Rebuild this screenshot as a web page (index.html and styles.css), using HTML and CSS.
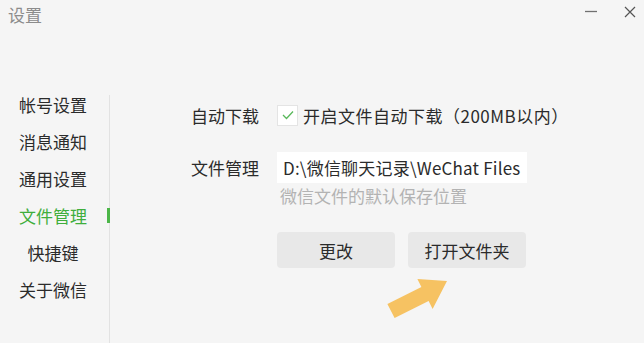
FILE: index.html
```html
<!DOCTYPE html>
<html lang="zh-CN">
<head>
    <meta charset="UTF-8">
    <meta name="viewport" content="width=device-width, initial-scale=1.0">
    <title>设置</title>
    <link rel="stylesheet" href="styles.css">
</head>
<body>
    <div class="titlebar">
        <span class="title">设置</span>
        <div class="win-btns">
            <svg class="win-btn" width="14" height="14" viewBox="0 0 14 14"><line x1="1" y1="6.5" x2="13" y2="6.5" stroke="#707070" stroke-width="1.3"/></svg>
            <svg class="win-btn" width="14" height="14" viewBox="0 0 14 14"><path d="M2 2 L12 12 M12 2 L2 12" stroke="#555" stroke-width="1.2" fill="none"/></svg>
        </div>
    </div>

    <div class="main">
        <ul class="nav">
            <li>帐号设置</li>
            <li>消息通知</li>
            <li>通用设置</li>
            <li class="active">文件管理</li>
            <li>快捷键</li>
            <li>关于微信</li>
        </ul>
        <div class="divider"></div>

        <div class="content">
            <div class="row">
                <span class="label">自动下载</span>
                <label class="check">
                    <span class="box">
                        <svg width="14" height="12" viewBox="0 0 14 12"><path d="M2 6 L5.5 9.5 L12 2.5" stroke="#59b85a" stroke-width="1.3" fill="none"/></svg>
                    </span>
                    <span class="check-text">开启文件自动下载（200MB以内）</span>
                </label>
            </div>

            <div class="row row-path">
                <span class="label">文件管理</span>
                <div class="path">D:\微信聊天记录\WeChat Files</div>
            </div>
            <div class="hint">微信文件的默认保存位置</div>

            <div class="actions">
                <button class="btn">更改</button>
                <button class="btn">打开文件夹</button>
            </div>
        </div>
    </div>

    <svg class="arrow" width="644" height="343" viewBox="0 0 644 343">
        <polygon points="387.4,303.9 421.4,286.9 417.4,278.9 447,281 432.6,309.1 428.6,301.1 394.6,318.1" fill="#f6c262"/>
    </svg>
</body>
</html>
```

FILE: styles.css
```css
body {
    margin: 0;
    width: 644px;
    height: 343px;
    overflow: hidden;
    background-color: #f5f5f5;
    font-family: "Noto Sans CJK SC", "Noto Sans", sans-serif;
    color: #2b2b2b;
    position: relative;
}
.titlebar {
    display: flex;
    justify-content: space-between;
    align-items: flex-start;
    height: 86px;
    padding-left: 8px;
}
.title {
    font-size: 17px;
    line-height: 30px;
    color: #8c8c8c;
}
.win-btns {
    display: flex;
    gap: 25px;
    padding-top: 5px;
    padding-right: 7px;
}
.main {
    display: flex;
    height: 257px;
}
.nav {
    list-style: none;
    margin: 0;
    padding: 0 22px 0 19px;
    width: 68px;
}
.nav li {
    height: 37px;
    line-height: 37px;
    text-align: center;
    font-size: 17px;
    position: relative;
}
.nav li.active {
    color: #3fae3c;
}
.nav li.active::after {
    content: "";
    position: absolute;
    right: -23px;
    top: 11px;
    width: 3px;
    height: 15px;
    background-color: #4cb648;
    z-index: 1;
}
.divider {
    width: 1px;
    margin-top: 9px;
    background-color: #e2e2e2;
}
.content {
    padding: 17px 0 0 81px;
}
.row {
    display: flex;
    align-items: center;
    height: 24px;
}
.label {
    width: 86px;
    font-size: 17px;
}
.check {
    display: flex;
    align-items: center;
    gap: 5px;
    font-size: 17px;
}
.check-text {
    letter-spacing: 0.5px;
}
.box {
    width: 19px;
    height: 19px;
    background: #fff;
    border: 1px solid #e4e4e4;
    display: flex;
    align-items: center;
    justify-content: center;
}
.row-path {
    height: 31px;
    margin-top: 25px;
}
.path {
    width: 244px;
    height: 31px;
    line-height: 31px;
    padding-left: 6px;
    background: #fff;
    font-size: 17px;
    letter-spacing: 0.2px;
    white-space: nowrap;
    overflow: hidden;
}
.hint {
    margin: 1px 0 0 89px;
    font-size: 17px;
    line-height: 24px;
    color: #b3b3b3;
}
.actions {
    display: flex;
    gap: 13px;
    margin: 24px 0 0 86px;
}
.btn {
    width: 118px;
    height: 36px;
    border: none;
    border-radius: 4px;
    background-color: #e8e8e8;
    font-family: inherit;
    font-size: 17px;
    color: #2b2b2b;
    padding: 0;
}
.arrow {
    position: absolute;
    left: 0;
    top: 0;
    pointer-events: none;
}
```
